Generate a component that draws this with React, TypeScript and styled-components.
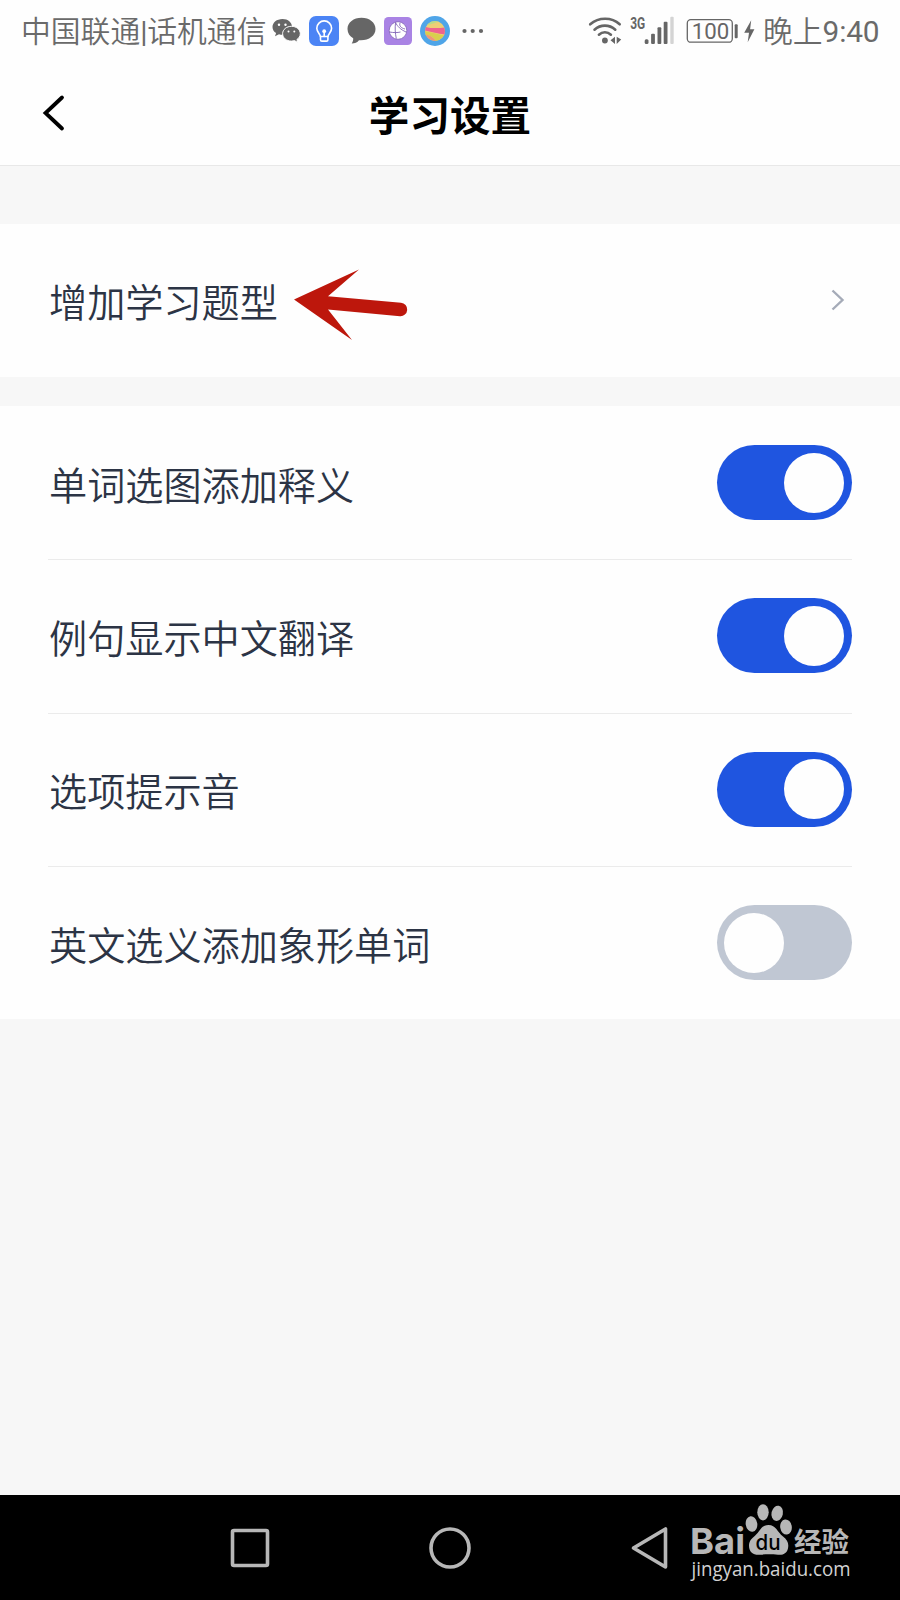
import React, { useState } from "react";
import styled, { createGlobalStyle } from "styled-components";

const GlobalStyle = createGlobalStyle`
  * { box-sizing: border-box; }
  body { margin: 0; background: #f7f7f7; }
`;

const Screen = styled.div`
  width: 900px;
  height: 1600px;
  display: flex;
  flex-direction: column;
  background: #f7f7f7;
  font-family: "Noto Sans CJK SC", sans-serif;
  overflow: hidden;
`;

const StatusBar = styled.div`
  flex: none;
  height: 61px;
  padding: 0 20px 0 21px;
  display: flex;
  align-items: center;
  justify-content: space-between;
  background: #fefefe;
  color: #6a6a6a;
`;

const StatusGroup = styled.div<{ $gap: number }>`
  display: flex;
  align-items: center;
  gap: ${(p) => p.$gap}px;
  height: 60px;
`;

const StatusText = styled.span<{ $width: number }>`
  width: ${(p) => p.$width}px;
  padding-top: 2px;
  font-family: Roboto, "Noto Sans CJK SC", sans-serif;
  font-size: 29.8px;
  font-weight: 350;
  line-height: 60px;
  white-space: nowrap;
`;

const Digits = styled.span`
  font-weight: 400;
  letter-spacing: -0.2px;
`;

const Glyph = styled.svg`
  display: block;
  flex: none;
  overflow: visible;
`;

const Header = styled.header`
  flex: none;
  height: 105px;
  display: grid;
  grid-template-columns: 106px 1fr 106px;
  align-items: center;
  background: #fefefe;
  border-bottom: 1px solid #e8e8e8;
`;

const BackButton = styled.button`
  border: 0;
  padding: 0 0 0 42px;
  background: none;
  height: 104px;
  display: flex;
  align-items: center;
`;

const Title = styled.h1`
  margin: 0;
  padding-top: 2px;
  text-align: center;
  font-size: 40.6px;
  line-height: 102px;
  font-weight: 700;
  color: #000;
`;

const Group = styled.section<{ $top: number }>`
  flex: none;
  margin-top: ${(p) => p.$top}px;
  padding: 0 48px;
  background: #fefefe;
`;

const Row = styled.div`
  height: 153.35px;
  display: flex;
  align-items: center;
  justify-content: space-between;
  & + & {
    padding-bottom: 1.4px;
    border-top: 1px solid #ebebeb;
  }
`;

const LinkSide = styled.div`
  display: flex;
  align-items: center;
  gap: 16px;
`;

const Label = styled.span`
  padding: 2px 0 0 1px;
  font-size: 38.15px;
  font-weight: 350;
  line-height: 56px;
  color: #2c3445;
  white-space: nowrap;
`;

const Switch = styled.button<{ $on: boolean }>`
  width: 135px;
  height: 75px;
  margin-right: 0.4px;
  padding: 0 7.5px;
  border: 0;
  border-radius: 38px;
  display: flex;
  align-items: center;
  justify-content: ${(p) => (p.$on ? "flex-end" : "flex-start")};
  background: ${(p) => (p.$on ? "#1f55e0" : "#c0c7d3")};
`;

const Knob = styled.span`
  width: 60px;
  height: 60px;
  border-radius: 50%;
  background: #fefefe;
`;

const NavBar = styled.nav`
  position: relative;
  flex: none;
  height: 105px;
  margin-top: auto;
  padding-left: 230px;
  display: flex;
  align-items: center;
  gap: 159px;
  background: #000;
`;

const Watermark = styled.svg`
  position: absolute;
  left: 680px;
  top: 0;
`;

function WeChatIcon() {
  return (
    <Glyph width="29" height="25" viewBox="0 0 29 25">
      <path d="M10.500 1C4.700 1 .5 4.600.5 9c0 2.600 1.300 4.600 3.600 6.100L3 18.200l4-2c1.200.4 2.300.6 3.600.6C16.200 16.800 20 13.500 20 9s-4-8-9.500-8Z" fill="#666" />
      <path d="M19.500 8.300c-4.900 0-8.900 3.200-8.900 7.400s4 7.400 8.900 7.400c1.100 0 2-.2 3-.5l3.300 1.900-.9-3c2-1.300 3.400-3.300 3.400-5.800 0-4.200-4-7.400-8.800-7.400Z" fill="#666" stroke="#fefefe" strokeWidth="1" />
      <g fill="#fefefe"><circle cx="7" cy="6.800" r="1.200" /><circle cx="13.500" cy="6.800" r="1.200" /><circle cx="16.500" cy="13.500" r="1" /><circle cx="22.300" cy="13.500" r="1" /></g>
    </Glyph>
  );
}

function BulbIcon() {
  return (
    <Glyph width="30" height="30" viewBox="0 0 30 30">
      <rect width="30" height="30" rx="7" fill="#4b84f5" />
      <g fill="none" stroke="#fff" strokeWidth="1.600" strokeLinecap="round" strokeLinejoin="round">
        <path d="M11.400 20.500c0-2.500-3.600-4-3.600-8.200a7.400 7.400 0 0 1 14.800 0c0 4.200-3.600 5.700-3.600 8.200Z" />
        <path d="M11.500 20.500v3.200c0 .9.500 1.400 1.400 1.400h4.600c.9 0 1.400-.5 1.400-1.400v-3.200M15.200 15.500v5" />
      </g>
      <circle cx="15.200" cy="15.200" r="1.900" fill="#fff" />
    </Glyph>
  );
}

function BubbleIcon() {
  return (
    <Glyph width="29" height="28" viewBox="0 0 29 28">
      <path d="M14.500.8C6.600.8.5 5.500.5 12c0 4 2.200 7.300 5.700 9.200.1 2-.4 3.700-1.500 5.400 3.200-.2 5.600-1.300 7.300-3.400 9.200.8 16.500-4.100 16.500-11.200C28.500 5.500 22.400.8 14.500.8Z" fill="#666" />
    </Glyph>
  );
}

function BallIcon() {
  return (
    <Glyph width="28" height="28" viewBox="0 0 28 28">
      <rect width="28" height="28" rx="4.500" fill="#a983e4" />
      <circle cx="14" cy="13.500" r="8.800" fill="#fff" stroke="#8063b5" strokeWidth=".8" />
      <path d="M11.500 5.500c-.6 6-.3 11 .8 16M5.500 15c4 .8 8 .8 11 0M11.500 5.500c2 4 5 7 10.500 9.500M16 6c-1 3 1 5 5 6" fill="none" stroke="#8063b5" strokeWidth=".9" />
    </Glyph>
  );
}

function PlanetIcon() {
  return (
    <Glyph width="30" height="30" viewBox="0 0 30 30">
      <defs><clipPath id="planet"><circle cx="15" cy="15" r="10" /></clipPath></defs>
      <circle cx="15" cy="15" r="15" fill="#4fa5e8" />
      <g clipPath="url(#planet)">
        <rect width="30" height="30" fill="#edcf75" />
        <path d="M3 9c7 1 12-3 19-4L13 2 3 6Z" fill="#b9dc87" />
        <path d="M3 10c7 2.500 14 2.500 23 1.500v7C17 17.500 12 16.500 3 14Z" fill="#ed638f" />
        <path d="M3 15c8 1 14 3 22 4.500L17 26C13 20 9 19 4 19Z" fill="#d8ce4d" />
        <path d="M4 18.500c5 0 9 2 13 7.500H7Z" fill="#ee9777" />
      </g>
    </Glyph>
  );
}

function MoreIcon() {
  return (
    <Glyph width="22" height="6" viewBox="0 0 22 6" fill="#666">
      <circle cx="2.500" cy="3" r="2.100" /><circle cx="10.700" cy="3" r="2.100" /><circle cx="19" cy="3" r="2.100" />
    </Glyph>
  );
}

function SignalIcons() {
  return (
    <Glyph width="169" height="30" viewBox="-0.7 0.3 169 30">
      <g fill="none" stroke="#666" strokeWidth="2.600" strokeLinecap="round">
        <path d="M1.500 8.600c8.500-7.400 21.500-7.400 29.500 0" />
        <path d="M5.800 14c6-5.400 14.800-5.400 20.800 0" />
        <path d="M10.200 19c3.500-3.200 8.500-3.200 12 0" />
      </g>
      <circle cx="16.200" cy="24.800" r="2.900" fill="#666" />
      <path d="M26.300 21v7.200l-4.500-3.600ZM28 28.200V21l4.500 2.800Z" fill="#666" />
      <text x="41.500" y="12.800" textLength="15" lengthAdjust="spacingAndGlyphs" fontFamily="Roboto, sans-serif" fontSize="16.500" fontWeight="700" fill="#666">3G</text>
      <g fill="#666">
        <rect x="56" y="23.500" width="3.800" height="4.800" rx="1.500" />
        <rect x="62.400" y="18" width="3.800" height="10.300" rx="1" />
        <rect x="68.800" y="11.500" width="3.800" height="16.800" rx="1" />
        <rect x="75" y="6" width="3.800" height="22.300" rx="1" />
      </g>
      <rect x="81.600" y="1" width="3.400" height="27.300" rx="1" fill="#d4d4d4" />
      <rect x="98.600" y="4" width="45" height="22.500" rx="3.500" fill="none" stroke="#666" strokeWidth="1.300" />
      <text x="103" y="23.300" textLength="37.500" lengthAdjust="spacingAndGlyphs" fontFamily="Roboto, sans-serif" fontSize="22.500" fontWeight="400" fill="#666">100</text>
      <rect x="146" y="8.500" width="3" height="14" rx="1" fill="#666" />
      <path d="M162.500 4.500 155.500 17h4.800l-1.300 9.500 6.700-13h-4.300Z" fill="#666" />
    </Glyph>
  );
}

function Toggle({ initial, label }: { initial: boolean; label: string }) {
  const [on, setOn] = useState(initial);
  return (
    <Switch $on={on} role="switch" aria-checked={on} aria-label={label} onClick={() => setOn(!on)}>
      <Knob />
    </Switch>
  );
}

const options = [
  { label: "单词选图添加释义", on: true },
  { label: "例句显示中文翻译", on: true },
  { label: "选项提示音", on: true },
  { label: "英文选义添加象形单词", on: false },
];

function BaiduMark() {
  return (
    <Watermark width="200" height="105" viewBox="0 0 200 105">
      <g fill="#b7b7b7">
        <text x="10" y="58.500" textLength="55" lengthAdjust="spacingAndGlyphs" fontFamily="Inter, sans-serif" fontWeight="700" fontSize="36">Bai</text>
        <ellipse cx="71.500" cy="29" rx="5.800" ry="7.900" transform="rotate(-8 71.500 29)" />
        <ellipse cx="83" cy="17.300" rx="5.700" ry="8.100" />
        <ellipse cx="97.200" cy="18.300" rx="5.700" ry="7.700" transform="rotate(12 97.200 18.300)" />
        <ellipse cx="106" cy="32" rx="5.800" ry="7.600" transform="rotate(-8 106 32)" />
        <path d="M88.500 30c7.500 0 8.800 7 14.500 11.500 4 3.200 5.700 6 5.200 10.500-.7 6.500-5 8.200-10.200 7.700-6-.6-12-.6-17.500 0-7 .8-11.500-2.700-11.500-9 0-5 3-7.400 6-10C80.500 36 81 30 88.500 30Z" />
        <text x="114" y="56.500" textLength="55" lengthAdjust="spacingAndGlyphs" fontFamily="Noto Sans CJK SC, sans-serif" fontWeight="700" fontSize="27">经验</text>
      </g>
      <text x="75.500" y="54.500" textLength="25" lengthAdjust="spacingAndGlyphs" fontFamily="Inter, sans-serif" fontWeight="500" fontSize="21" fill="#000">du</text>
      <text x="11.500" y="80.500" textLength="159" lengthAdjust="spacingAndGlyphs" fontFamily="Open Sans, sans-serif" fontSize="19.500" fill="#d2d2d2">jingyan.baidu.com</text>
    </Watermark>
  );
}

export default function App() {
  return (
    <Screen>
      <GlobalStyle />
      <StatusBar>
        <StatusGroup $gap={12}>
          <StatusGroup $gap={8}>
            <StatusGroup $gap={5}>
              <StatusText $width={246}>中国联通<Digits>|</Digits>话机通信</StatusText>
              <WeChatIcon />
            </StatusGroup>
            <BulbIcon />
            <BubbleIcon />
            <BallIcon />
            <PlanetIcon />
          </StatusGroup>
          <MoreIcon />
        </StatusGroup>
        <StatusGroup $gap={6}>
          <SignalIcons />
          <StatusText $width={117}>晚上<Digits>9:40</Digits></StatusText>
        </StatusGroup>
      </StatusBar>
      <Header>
        <BackButton aria-label="返回">
          <Glyph width="23" height="36" viewBox="0 0 23 36">
            <path d="M20 2.500 3.500 18 20 33.500" fill="none" stroke="#000" strokeWidth="3.800" strokeLinecap="round" strokeLinejoin="miter" />
          </Glyph>
        </BackButton>
        <Title>学习设置</Title>
      </Header>
      <Group $top={57.7}>
        <Row>
          <LinkSide>
            <Label>增加学习题型</Label>
            <Glyph width="114" height="72" viewBox="0 -4 114 72">
              <path d="M0 31.500 65 1.500 34 28.200 107 34.800a6.500 6.500 0 0 1-1 13.400L34 41.500 58 72Z" fill="#bd170c" />
            </Glyph>
          </LinkSide>
          <Glyph width="22" height="22" viewBox="-1 0 22 22">
            <path d="M1.500 1.500 11.500 11 1.500 20.500" fill="none" stroke="#a5abb8" strokeWidth="2.400" />
          </Glyph>
        </Row>
      </Group>
      <Group $top={29}>
        {options.map((o) => (
          <Row key={o.label}>
            <Label>{o.label}</Label>
            <Toggle initial={o.on} label={o.label} />
          </Row>
        ))}
      </Group>
      <NavBar>
        <Glyph width="40" height="40" viewBox="0 0 40 40">
          <rect x="2.500" y="2.500" width="35" height="35" rx="1.500" fill="none" stroke="#b7b7b7" strokeWidth="3.600" />
        </Glyph>
        <Glyph width="42" height="42" viewBox="0 0 42 42">
          <circle cx="21" cy="21" r="19" fill="none" stroke="#b7b7b7" strokeWidth="3.600" />
        </Glyph>
        <Glyph width="40" height="42" viewBox="0 0 40 42">
          <path d="M35.500 2v38L3.500 21Z" fill="none" stroke="#b7b7b7" strokeWidth="3.600" strokeLinejoin="round" />
        </Glyph>
        <BaiduMark />
      </NavBar>
    </Screen>
  );
}
